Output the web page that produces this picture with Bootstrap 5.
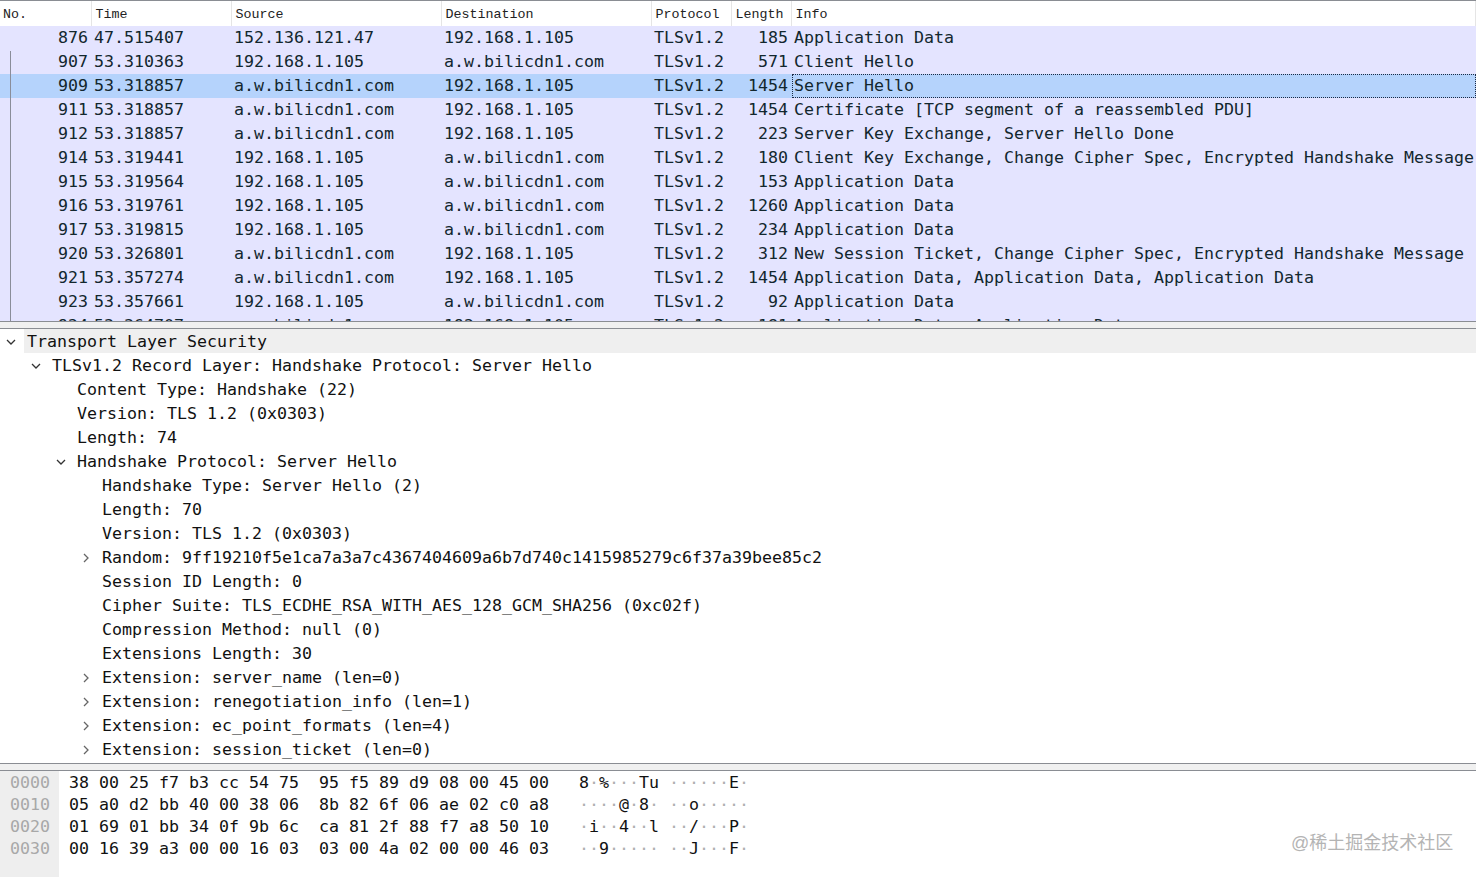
<!DOCTYPE html>
<html lang="en">
<head>
<meta charset="utf-8">
<title>Packet capture</title>
<link href="https://cdn.jsdelivr.net/npm/bootstrap@5.3.0/dist/css/bootstrap.min.css" rel="stylesheet">
<style>
html,body{height:877px;overflow:hidden;background:#fff}
body{font-family:"DejaVu Sans Mono","Liberation Mono",monospace;font-size:16.61px;line-height:24px;color:#12272e}
.pane-list{height:322px;overflow:hidden;border-top:1px solid #8a8d93;border-bottom:1px solid #8a8d93;box-sizing:border-box}
.pkt{table-layout:fixed;width:1476px;border-collapse:collapse;margin:0}
.pkt th{height:25px;font:400 13.33px/22px "Liberation Mono",monospace;color:#222;padding:3px 0 0 4px;vertical-align:top;border-right:1px solid #e5e5e5;background:#fff;white-space:nowrap}
.pkt th:first-child{padding-left:3px}
.pkt td{height:24px;padding:0 0 0 3px;background:#e4e4ff;white-space:pre;overflow:hidden;color:#12272e;line-height:24px}
.pkt td.ra{text-align:right;padding:0 3px 0 0}
.pkt tr.sel td{background:#b5d3fc}
.pkt tr.sel td.cur{position:relative}
.pkt tr.sel td.cur::after{content:"";position:absolute;top:0;right:0;bottom:0;left:1px;border:1px dotted #1a2a44}
.rel-line{position:absolute;left:10px;top:50px;height:271px;width:1px;background:#8a8d9a}
.split{height:6px;background:#f0f0f0;border-bottom:1px solid #8a8d93;box-sizing:content-box}
.pane-tree{height:434px;overflow:hidden}
.node{height:24px;line-height:26px;position:relative;white-space:pre;color:#111}
.node.hl{background:#efefef;margin-left:24px}
.l0{padding-left:3px}.l1{padding-left:52px}.l2{padding-left:77px}.l3{padding-left:102px}
.chev{position:absolute;top:8px;width:10px;height:10px;fill:none;stroke:#666;stroke-width:1.3}
.chev.open{stroke:#333}
.l0 .chev{left:-18px}.l1 .chev{left:31px}.l2 .chev{left:56px}.l3 .chev{left:81px}
.split2{height:8px;background:#f0f0f0;border-top:1px solid #8a8d93;border-bottom:1px solid #8a8d93;box-sizing:border-box}
.pane-hex{height:106px}
.gutter{width:59px;background:#eee;color:#a8a8a8;padding:1px 0 0 10px}
.hexrow{height:22px;line-height:22px;white-space:pre}
.bytes{padding:1px 0 0 10px;color:#111}
.dot{color:#b0b0b0}
.mark-wm{position:absolute;left:1291px;top:832px;font:18px/22px "Liberation Sans","Noto Sans CJK SC",sans-serif;color:#b4b4b4;white-space:nowrap}
</style>
</head>
<body class="position-relative">
<div class="pane-list position-relative">
<table class="pkt">
<colgroup><col style="width:91px"><col style="width:140px"><col style="width:210px"><col style="width:210px"><col style="width:80px"><col style="width:60px"><col></colgroup>
<thead><tr><th>No.</th><th>Time</th><th>Source</th><th>Destination</th><th>Protocol</th><th>Length</th><th>Info</th></tr></thead>
<tbody>
<tr><td class="ra">876</td><td>47.515407</td><td>152.136.121.47</td><td>192.168.1.105</td><td>TLSv1.2</td><td class="ra">185</td><td>Application Data</td></tr>
<tr><td class="ra">907</td><td>53.310363</td><td>192.168.1.105</td><td>a.w.bilicdn1.com</td><td>TLSv1.2</td><td class="ra">571</td><td>Client Hello</td></tr>
<tr class="sel"><td class="ra">909</td><td>53.318857</td><td>a.w.bilicdn1.com</td><td>192.168.1.105</td><td>TLSv1.2</td><td class="ra">1454</td><td class="cur">Server Hello</td></tr>
<tr><td class="ra">911</td><td>53.318857</td><td>a.w.bilicdn1.com</td><td>192.168.1.105</td><td>TLSv1.2</td><td class="ra">1454</td><td>Certificate [TCP segment of a reassembled PDU]</td></tr>
<tr><td class="ra">912</td><td>53.318857</td><td>a.w.bilicdn1.com</td><td>192.168.1.105</td><td>TLSv1.2</td><td class="ra">223</td><td>Server Key Exchange, Server Hello Done</td></tr>
<tr><td class="ra">914</td><td>53.319441</td><td>192.168.1.105</td><td>a.w.bilicdn1.com</td><td>TLSv1.2</td><td class="ra">180</td><td>Client Key Exchange, Change Cipher Spec, Encrypted Handshake Message</td></tr>
<tr><td class="ra">915</td><td>53.319564</td><td>192.168.1.105</td><td>a.w.bilicdn1.com</td><td>TLSv1.2</td><td class="ra">153</td><td>Application Data</td></tr>
<tr><td class="ra">916</td><td>53.319761</td><td>192.168.1.105</td><td>a.w.bilicdn1.com</td><td>TLSv1.2</td><td class="ra">1260</td><td>Application Data</td></tr>
<tr><td class="ra">917</td><td>53.319815</td><td>192.168.1.105</td><td>a.w.bilicdn1.com</td><td>TLSv1.2</td><td class="ra">234</td><td>Application Data</td></tr>
<tr><td class="ra">920</td><td>53.326801</td><td>a.w.bilicdn1.com</td><td>192.168.1.105</td><td>TLSv1.2</td><td class="ra">312</td><td>New Session Ticket, Change Cipher Spec, Encrypted Handshake Message</td></tr>
<tr><td class="ra">921</td><td>53.357274</td><td>a.w.bilicdn1.com</td><td>192.168.1.105</td><td>TLSv1.2</td><td class="ra">1454</td><td>Application Data, Application Data, Application Data</td></tr>
<tr><td class="ra">923</td><td>53.357661</td><td>192.168.1.105</td><td>a.w.bilicdn1.com</td><td>TLSv1.2</td><td class="ra">92</td><td>Application Data</td></tr>
<tr><td class="ra">924</td><td>53.364707</td><td>a.w.bilicdn1.com</td><td>192.168.1.105</td><td>TLSv1.2</td><td class="ra">181</td><td>Application Data, Application Data</td></tr>
</tbody>
</table>
<div class="rel-line"></div>
</div>
<div class="split"></div>
<div class="pane-tree">
<div class="node hl l0"><svg class="chev open" viewBox="0 0 10 10"><path d="M1 3l4 4 4-4"/></svg>Transport Layer Security</div>
<div class="node l1"><svg class="chev open" viewBox="0 0 10 10"><path d="M1 3l4 4 4-4"/></svg>TLSv1.2 Record Layer: Handshake Protocol: Server Hello</div>
<div class="node l2">Content Type: Handshake (22)</div>
<div class="node l2">Version: TLS 1.2 (0x0303)</div>
<div class="node l2">Length: 74</div>
<div class="node l2"><svg class="chev open" viewBox="0 0 10 10"><path d="M1 3l4 4 4-4"/></svg>Handshake Protocol: Server Hello</div>
<div class="node l3">Handshake Type: Server Hello (2)</div>
<div class="node l3">Length: 70</div>
<div class="node l3">Version: TLS 1.2 (0x0303)</div>
<div class="node l3"><svg class="chev" viewBox="0 0 10 10"><path d="M3 1l4 4-4 4"/></svg>Random: 9ff19210f5e1ca7a3a7c4367404609a6b7d740c1415985279c6f37a39bee85c2</div>
<div class="node l3">Session ID Length: 0</div>
<div class="node l3">Cipher Suite: TLS_ECDHE_RSA_WITH_AES_128_GCM_SHA256 (0xc02f)</div>
<div class="node l3">Compression Method: null (0)</div>
<div class="node l3">Extensions Length: 30</div>
<div class="node l3"><svg class="chev" viewBox="0 0 10 10"><path d="M3 1l4 4-4 4"/></svg>Extension: server_name (len=0)</div>
<div class="node l3"><svg class="chev" viewBox="0 0 10 10"><path d="M3 1l4 4-4 4"/></svg>Extension: renegotiation_info (len=1)</div>
<div class="node l3"><svg class="chev" viewBox="0 0 10 10"><path d="M3 1l4 4-4 4"/></svg>Extension: ec_point_formats (len=4)</div>
<div class="node l3"><svg class="chev" viewBox="0 0 10 10"><path d="M3 1l4 4-4 4"/></svg>Extension: session_ticket (len=0)</div>
</div>
<div class="split2"></div>
<div class="pane-hex d-flex">
<div class="gutter">
<div class="hexrow">0000</div><div class="hexrow">0010</div><div class="hexrow">0020</div><div class="hexrow">0030</div>
</div>
<div class="bytes flex-grow-1">
<div class="hexrow">38 00 25 f7 b3 cc 54 75  95 f5 89 d9 08 00 45 00   8<span class="dot">·</span>%<span class="dot">···</span>Tu <span class="dot">······</span>E<span class="dot">·</span></div>
<div class="hexrow">05 a0 d2 bb 40 00 38 06  8b 82 6f 06 ae 02 c0 a8   <span class="dot">····</span>@<span class="dot">·</span>8<span class="dot">·</span> <span class="dot">··</span>o<span class="dot">·····</span></div>
<div class="hexrow">01 69 01 bb 34 0f 9b 6c  ca 81 2f 88 f7 a8 50 10   <span class="dot">·</span>i<span class="dot">··</span>4<span class="dot">··</span>l <span class="dot">··</span>/<span class="dot">···</span>P<span class="dot">·</span></div>
<div class="hexrow">00 16 39 a3 00 00 16 03  03 00 4a 02 00 00 46 03   <span class="dot">··</span>9<span class="dot">·····</span> <span class="dot">··</span>J<span class="dot">···</span>F<span class="dot">·</span></div>
</div>
</div>
<div class="mark-wm">@稀土掘金技术社区</div>
<script src="https://cdn.jsdelivr.net/npm/bootstrap@5.3.0/dist/js/bootstrap.bundle.min.js"></script>
</body>
</html>
